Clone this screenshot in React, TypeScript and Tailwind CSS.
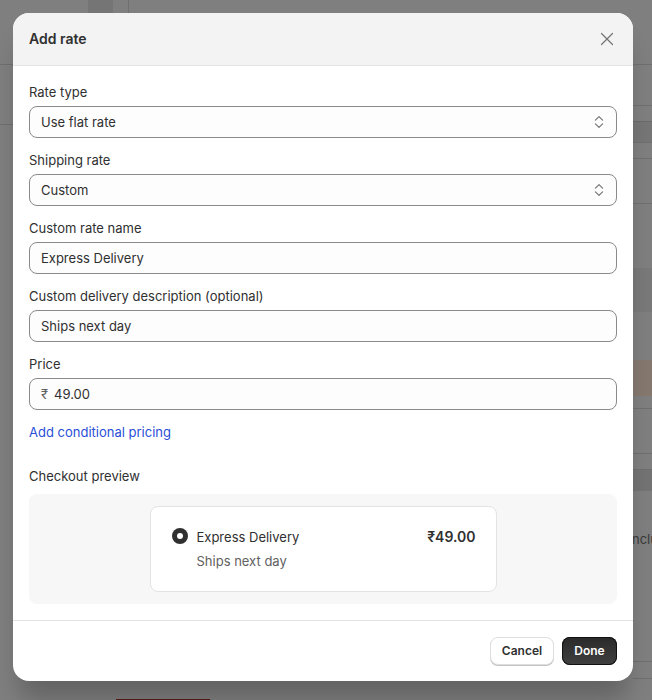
import React from "react";
import { X } from "lucide-react";

const font = "font-['Inter','Liberation_Sans',sans-serif]";

const fieldClass =
  "mt-[4px] flex h-8 w-full items-center rounded-lg border border-[#8a8a8a] bg-[#fdfdfd] px-[11px] text-[13px] text-[#303030]";

const SelectIcon = () => (
  <svg width="10" height="14" viewBox="0 0 10 14" fill="none" stroke="#737373" strokeWidth="1.2" strokeLinecap="round" strokeLinejoin="round" className="mr-[1px] shrink-0">
    <path d="M1.4 5.1 5 1.6l3.6 3.5" />
    <path d="M1.4 8.9 5 12.4l3.6-3.5" />
  </svg>
);

const Field = ({ label, value, select }: { label: string; value: string; select?: boolean }) => (
  <div>
    <div className="h-5 text-[13px] leading-5 text-[#303030]">{label}</div>
    <div className={fieldClass}>
      <span className="mt-[2px] flex-1">{value}</span>
      {select && <SelectIcon />}
    </div>
  </div>
);

// dimmed page showing to the right of the modal
const RightStrip = () => (
  <div className="flex w-[19px] flex-col overflow-hidden">
    <div className="h-[65px] shrink-0 border-b border-[#6f6f6f]" />
    <div className="h-[41px] shrink-0 border-b border-[#6f6f6f]" />
    <div className="h-[16px] shrink-0 border-b border-[#6a6a6a]" />
    <div className="h-[21px] shrink-0 border-b border-[#6f6f6f] bg-[#767676]" />
    <div className="h-[16px] shrink-0 border-b border-[#6f6f6f]" />
    <div className="h-[45px] shrink-0 border-b border-[#6f6f6f]" />
    <div className="h-[64px] shrink-0" />
    <div className="h-[44px] shrink-0 bg-[#797979]" />
    <div className="h-[48px] shrink-0" />
    <div className="h-[36px] shrink-0 bg-[#85786f]" />
    <div className="h-[13px] shrink-0 border-b border-[#6f6f6f]" />
    <div className="h-[45px] shrink-0 border-b border-[#6f6f6f]" />
    <div className="h-[16px] shrink-0 border-b border-[#6f6f6f]" />
    <div className="h-[21px] shrink-0 bg-[#737373]" />
    <div className="h-[171px] shrink-0 whitespace-nowrap border-b border-[#6f6f6f] pt-[40px] text-[13px] leading-4 text-[#3a3a3a]">
      <span className="-ml-[1px] block">nclu</span>
    </div>
    <div className="h-[17px] shrink-0 border-b border-[#6f6f6f]" />
  </div>
);

const LeftStrip = () => (
  <div className="flex w-[13px] flex-col">
    <div className="h-[65px] border-b border-[#6f6f6f]" />
    <div className="h-[60px] border-b border-[#6f6f6f]" />
  </div>
);

const MiddleStrip = () => (
  <div className="flex flex-1 flex-col justify-between">
    <div className="ml-[75px] flex h-[13px]">
      <div className="w-[25px] bg-[#757575]" />
      <div className="w-[16px] border-r border-[#707070]" />
    </div>
    <div className="ml-[103px] h-px w-[94px] bg-[#5b1a1a]" />
  </div>
);

const App = () => {
  return (
    <div className={`relative flex h-[700px] w-[652px] overflow-hidden bg-[#7f7f7f] ${font}`}>
      <LeftStrip />
      <MiddleStrip />
      <RightStrip />

      <div className="absolute left-[13px] top-[13px] flex h-[668px] w-[620px] flex-col overflow-hidden rounded-2xl bg-white shadow-[0_24px_24px_-6px_rgba(0,0,0,0.22)]">
        <div className="flex h-[53px] shrink-0 items-center justify-between border-b border-[#e3e3e3] bg-[#f3f3f3] pl-4 pr-[15px]">
          <span className="text-sm font-semibold text-[#303030]">Add rate</span>
          <X size={22} strokeWidth={1.3} className="text-[#757575]" />
        </div>

        <div className="flex flex-1 flex-col px-4 pt-4">
          <div className="flex flex-col gap-3">
            <Field label="Rate type" value="Use flat rate" select />
            <Field label="Shipping rate" value="Custom" select />
            <Field label="Custom rate name" value="Express Delivery" />
            <Field label="Custom delivery description (optional)" value="Ships next day" />
            <div>
              <div className="h-5 text-[13px] leading-5 text-[#303030]">Price</div>
              <div className={fieldClass}>
                <span className="mr-[6px] mt-[2px] text-[13px] text-[#616161]">₹</span>
                <span className="mt-[2px]">49.00</span>
              </div>
            </div>
          </div>

          <div className="mt-[12px] h-5 text-[13px] leading-5 text-[#2a4fd7]">Add conditional pricing</div>

          <div className="mt-6 h-5 text-[13px] leading-5 text-[#303030]">Checkout preview</div>
          <div className="mt-2 flex h-[110px] items-center justify-center rounded-lg bg-[#f7f7f7]">
            <div className="h-[86px] w-[347px] rounded-lg border border-[#e3e3e3] bg-white pl-[21px] pr-[20px] pt-[20px]">
              <div className="flex items-start">
                <span className="mt-[1px] flex h-4 w-4 items-center justify-center rounded-full bg-[#303030]">
                  <span className="h-[6px] w-[6px] rounded-full bg-white" />
                </span>
                <span className="ml-[9px] flex-1 text-[13px] leading-5 text-[#303030]">Express Delivery</span>
                <span className="text-sm font-semibold leading-5 text-[#303030]">₹49.00</span>
              </div>
              <div className="ml-[25px] mt-[4px] text-[13px] leading-5 text-[#616161]">Ships next day</div>
            </div>
          </div>
        </div>

        <div className="flex h-[61px] shrink-0 items-center justify-end gap-2 border-t border-[#e3e3e3] px-4">
          <button className="h-7 w-[64px] rounded-lg border border-[#dedede] bg-white text-xs font-semibold text-[#303030] shadow-[0_1px_0_#c4c4c4]">
            Cancel
          </button>
          <button className="h-7 w-[55px] rounded-lg bg-gradient-to-b from-[#2a2a2a] to-[#404040] text-xs font-semibold text-white ring-1 ring-inset ring-[#111]">
            Done
          </button>
        </div>
      </div>
    </div>
  );
};

export default App;
